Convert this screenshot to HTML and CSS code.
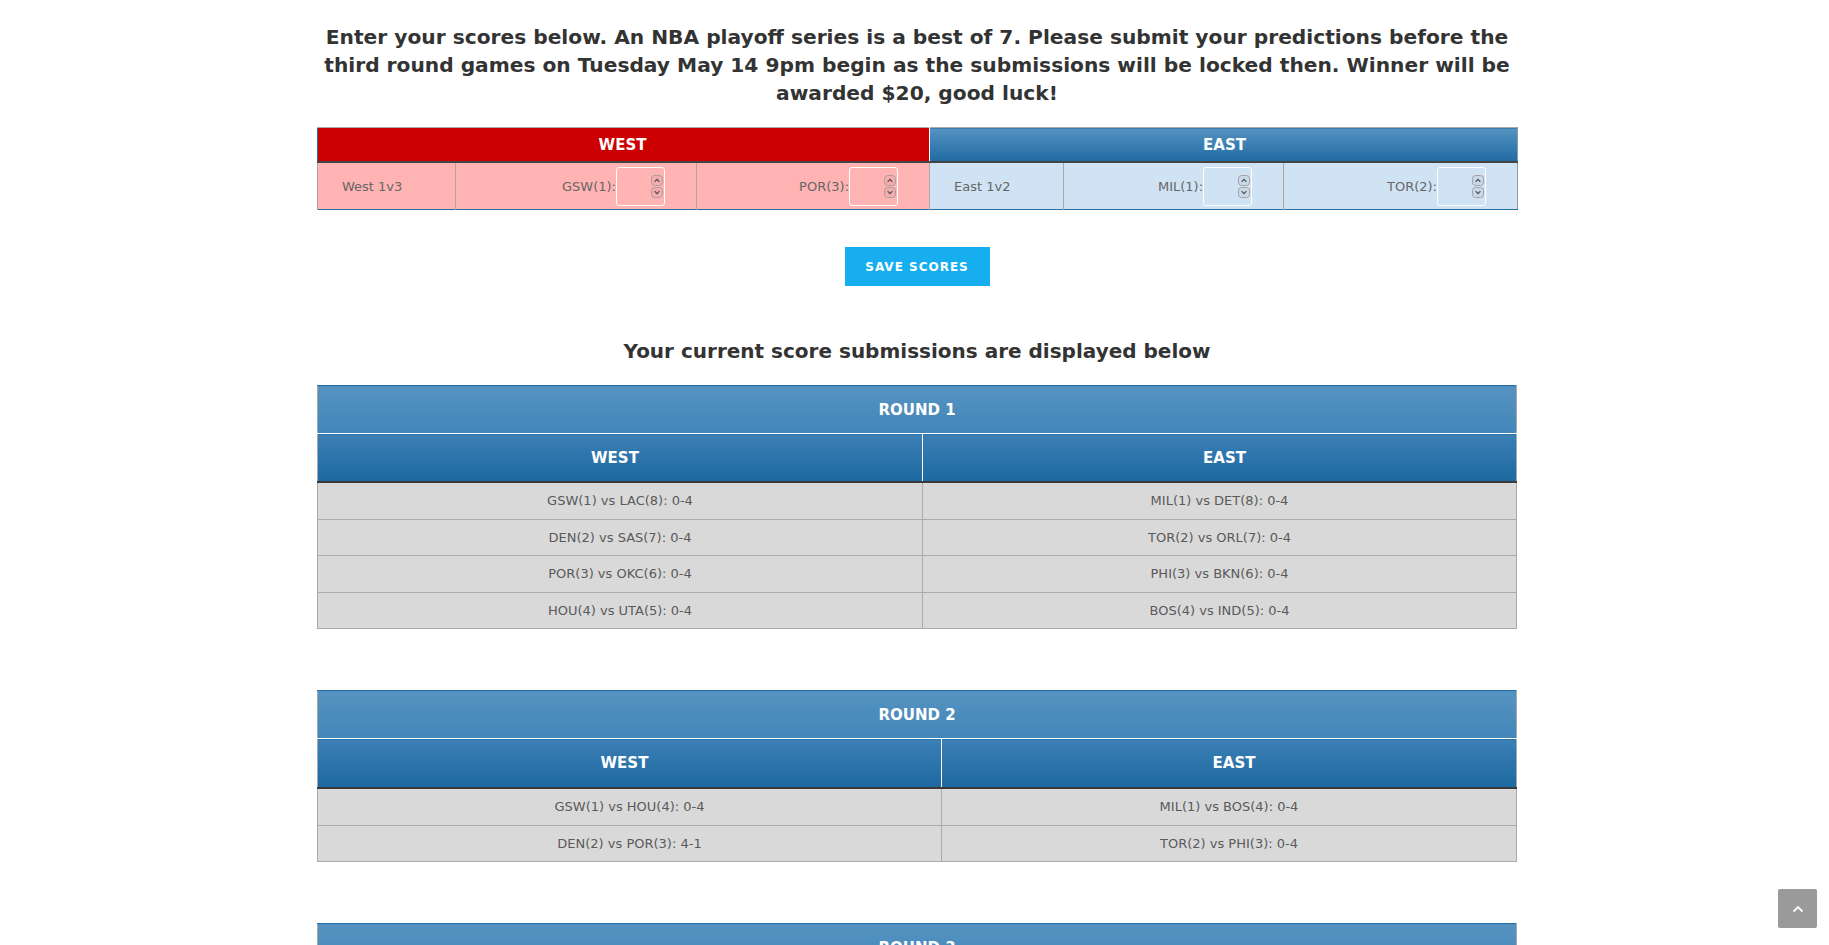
FILE: index.html
```html
<!DOCTYPE html>
<html lang="en">
<head>
<meta charset="utf-8">
<title>NBA Playoff Predictions</title>
<link rel="stylesheet" href="styles.css">
</head>
<body>
<div class="wrap">
  <p class="intro">Enter your scores below. An NBA playoff series is a best of 7. Please submit your predictions before the third round games on Tuesday May 14 9pm begin as the submissions will be locked then. Winner will be awarded $20, good luck!</p>

  <table class="pick">
    <colgroup>
      <col class="pc-1"><col class="pc-2"><col class="pc-3"><col class="pc-4"><col class="pc-5"><col class="pc-6">
    </colgroup>
    <thead>
      <tr>
        <th colspan="3" class="pick-west">WEST</th>
        <th colspan="3" class="pick-east">EAST</th>
      </tr>
    </thead>
    <tbody>
      <tr>
        <td class="lbl west-bg">West 1v3</td>
        <td class="team west-bg"><span class="tname">GSW(1):</span><span class="field"><input class="score" type="number" min="0" max="4"><svg class="spin" width="13" height="24" viewBox="0 0 13 24"><rect x="0.5" y="0.5" width="11" height="10" rx="3"/><rect x="0.5" y="12.5" width="11" height="10" rx="3"/><path d="M3.6 6.8 L6 4.4 L8.4 6.8"/><path d="M3.6 16.2 L6 18.6 L8.4 16.2"/></svg></span></td>
        <td class="team west-bg"><span class="tname">POR(3):</span><span class="field"><input class="score" type="number" min="0" max="4"><svg class="spin" width="13" height="24" viewBox="0 0 13 24"><rect x="0.5" y="0.5" width="11" height="10" rx="3"/><rect x="0.5" y="12.5" width="11" height="10" rx="3"/><path d="M3.6 6.8 L6 4.4 L8.4 6.8"/><path d="M3.6 16.2 L6 18.6 L8.4 16.2"/></svg></span></td>
        <td class="lbl east-bg">East 1v2</td>
        <td class="team east-bg"><span class="tname">MIL(1):</span><span class="field"><input class="score" type="number" min="0" max="4"><svg class="spin" width="13" height="24" viewBox="0 0 13 24"><rect x="0.5" y="0.5" width="11" height="10" rx="3"/><rect x="0.5" y="12.5" width="11" height="10" rx="3"/><path d="M3.6 6.8 L6 4.4 L8.4 6.8"/><path d="M3.6 16.2 L6 18.6 L8.4 16.2"/></svg></span></td>
        <td class="team east-bg"><span class="tname">TOR(2):</span><span class="field"><input class="score" type="number" min="0" max="4"><svg class="spin" width="13" height="24" viewBox="0 0 13 24"><rect x="0.5" y="0.5" width="11" height="10" rx="3"/><rect x="0.5" y="12.5" width="11" height="10" rx="3"/><path d="M3.6 6.8 L6 4.4 L8.4 6.8"/><path d="M3.6 16.2 L6 18.6 L8.4 16.2"/></svg></span></td>
      </tr>
    </tbody>
  </table>

  <button class="save" type="button">Save Scores</button>

  <h2 class="sub">Your current score submissions are displayed below</h2>

  <table class="round r1">
    <colgroup><col class="r1-west"><col></colgroup>
    <thead>
      <tr><th colspan="2" class="round-title">ROUND 1</th></tr>
      <tr><th class="conf conf-west">WEST</th><th class="conf conf-east">EAST</th></tr>
    </thead>
    <tbody>
      <tr><td>GSW(1) vs LAC(8): 0-4</td><td>MIL(1) vs DET(8): 0-4</td></tr>
      <tr><td>DEN(2) vs SAS(7): 0-4</td><td>TOR(2) vs ORL(7): 0-4</td></tr>
      <tr><td>POR(3) vs OKC(6): 0-4</td><td>PHI(3) vs BKN(6): 0-4</td></tr>
      <tr><td>HOU(4) vs UTA(5): 0-4</td><td>BOS(4) vs IND(5): 0-4</td></tr>
    </tbody>
  </table>

  <table class="round r2">
    <colgroup><col class="r2-west"><col></colgroup>
    <thead>
      <tr><th colspan="2" class="round-title">ROUND 2</th></tr>
      <tr><th class="conf conf-west">WEST</th><th class="conf conf-east">EAST</th></tr>
    </thead>
    <tbody>
      <tr><td>GSW(1) vs HOU(4): 0-4</td><td>MIL(1) vs BOS(4): 0-4</td></tr>
      <tr><td>DEN(2) vs POR(3): 4-1</td><td>TOR(2) vs PHI(3): 0-4</td></tr>
    </tbody>
  </table>

  <table class="round r3">
    <colgroup><col class="r3-west"><col></colgroup>
    <thead>
      <tr><th colspan="2" class="round-title">ROUND 3</th></tr>
      <tr><th class="conf conf-west">WEST</th><th class="conf conf-east">EAST</th></tr>
    </thead>
    <tbody>
      <tr><td>GSW(1) vs POR(3): -</td><td>MIL(1) vs TOR(2): -</td></tr>
    </tbody>
  </table>
</div>

<a class="to-top" href="#" aria-label="Back to top">
  <svg width="12" height="8" viewBox="0 0 12 8"><path d="M1.5 6.5 L6 2 L10.5 6.5" fill="none" stroke="#fff" stroke-width="1.8"/></svg>
</a>
</body>
</html>
```

FILE: styles.css
```css
html, body {
  margin: 0;
  background: #ffffff;
}
body {
  padding: 0 0 40px 5px;
  font-family: "DejaVu Sans", "Liberation Sans", sans-serif;
  color: #333333;
}
.wrap {
  width: 1200px;
  margin: 0 auto;
}
.intro {
  margin: 23px 0 0;
  font-size: 20.2px;
  line-height: 28px;
  font-weight: bold;
  text-align: center;
  color: #333333;
}

/* pick table */
.pick {
  margin-top: 20px;
  width: 1200px;
  border-collapse: collapse;
  table-layout: fixed;
  border-top: 1px solid #a9a9a9;
  border-right: 1px solid #8a9aa8;
  border-left: 1px solid #2a6ea6;
  border-bottom: 1px solid #2a6ea6;
}
.pc-1 { width: 138px; }
.pc-2 { width: 241px; }
.pc-3 { width: 233px; }
.pc-4 { width: 134px; }
.pc-5 { width: 220px; }
.pc-6 { width: 234px; }
.pick th {
  height: 33px;
  padding: 0;
  font-size: 15px;
  font-weight: bold;
  color: #ffffff;
  border-bottom: 2px solid #444444;
}
.pick-west {
  background: #cc0000;
  padding-right: 2px !important;
}
.pick-east {
  background: linear-gradient(#5592c0, #1f6ba3);
  border-left: 1px solid #ffffff;
  padding-left: 2px !important;
}
.pick td {
  height: 46px;
  padding: 0;
  font-size: 13px;
  color: #666666;
  border-left: 1px solid #a8a8a8;
  vertical-align: middle;
}
.west-bg { background: #ffb3b3; }
.east-bg { background: #d0e3f4; }
.pick td.lbl {
  padding-left: 24px;
  text-align: left;
}
.pick td.team {
  padding-right: 31px;
  text-align: right;
}
.tname {
  vertical-align: middle;
}
.field {
  position: relative;
  display: inline-block;
  vertical-align: middle;
  width: 49px;
  height: 39px;
}
.score {
  box-sizing: border-box;
  display: block;
  width: 49px;
  height: 39px;
  margin: 0;
  padding: 0 4px;
  background: transparent;
  border: 1px solid #ffffff;
  border-radius: 3px;
  font-family: "DejaVu Sans", sans-serif;
  font-size: 13px;
  color: #555555;
  -moz-appearance: textfield;
}
.score::-webkit-inner-spin-button,
.score::-webkit-outer-spin-button {
  -webkit-appearance: none;
  margin: 0;
}
.spin {
  position: absolute;
  right: 1px;
  top: 8px;
  pointer-events: none;
}
.spin rect {
  fill: rgba(0, 0, 0, 0.04);
  stroke: #a99f9f;
  stroke-width: 1;
}
.spin path {
  fill: none;
  stroke: #4a4a4a;
  stroke-width: 1.1;
}

/* save button */
.save {
  display: block;
  margin: 37px auto 0;
  width: 145px;
  height: 39px;
  padding: 0;
  border: none;
  background: #16aeef;
  color: #ffffff;
  font-family: "DejaVu Sans", sans-serif;
  font-size: 12px;
  font-weight: bold;
  letter-spacing: 1px;
  text-transform: uppercase;
}

.sub {
  margin: 51px 0 0;
  font-size: 20px;
  line-height: 28px;
  font-weight: bold;
  text-align: center;
  color: #333333;
}

/* round tables */
.round {
  width: 1200px;
  border-collapse: collapse;
  table-layout: fixed;
  border: 1px solid #a9a9a9;
  border-top-color: #2a6fa7;
}
.r1 { margin-top: 20px; }
.r2 { margin-top: 61px; }
.r3 { margin-top: 61px; }
.r1-west { width: 605px; }
.r2-west { width: 624px; }
.r3-west { width: 600px; }
.round th {
  padding: 0;
  font-size: 15px;
  font-weight: bold;
  color: #ffffff;
}
.round-title {
  height: 47px;
  background: linear-gradient(#5593c1, #4386b9);
  border-bottom: 1px solid #ffffff;
}
.conf {
  height: 47px;
  background: linear-gradient(#3b80b5, #1d68a1);
  border-bottom: 2px solid #3a3a3a;
}
.r2 .conf {
  height: 48px;
}
.round th.conf-west {
  padding-right: 10px;
}
.round th.conf-east {
  border-left: 1px solid #ffffff;
  padding-left: 10px;
}
.round td {
  height: 35.5px;
  padding: 0;
  text-align: center;
  font-size: 13px;
  color: #5a5a5a;
  background: #d9d9d9;
  border-top: 1px solid #ababab;
}
.round td + td {
  border-left: 1px solid #ababab;
}

/* back to top */
.to-top {
  position: fixed;
  right: 12px;
  bottom: 17px;
  width: 39px;
  height: 39px;
  border-radius: 2px;
  background: #9a9a9a;
  display: flex;
  align-items: center;
  justify-content: center;
}
```
